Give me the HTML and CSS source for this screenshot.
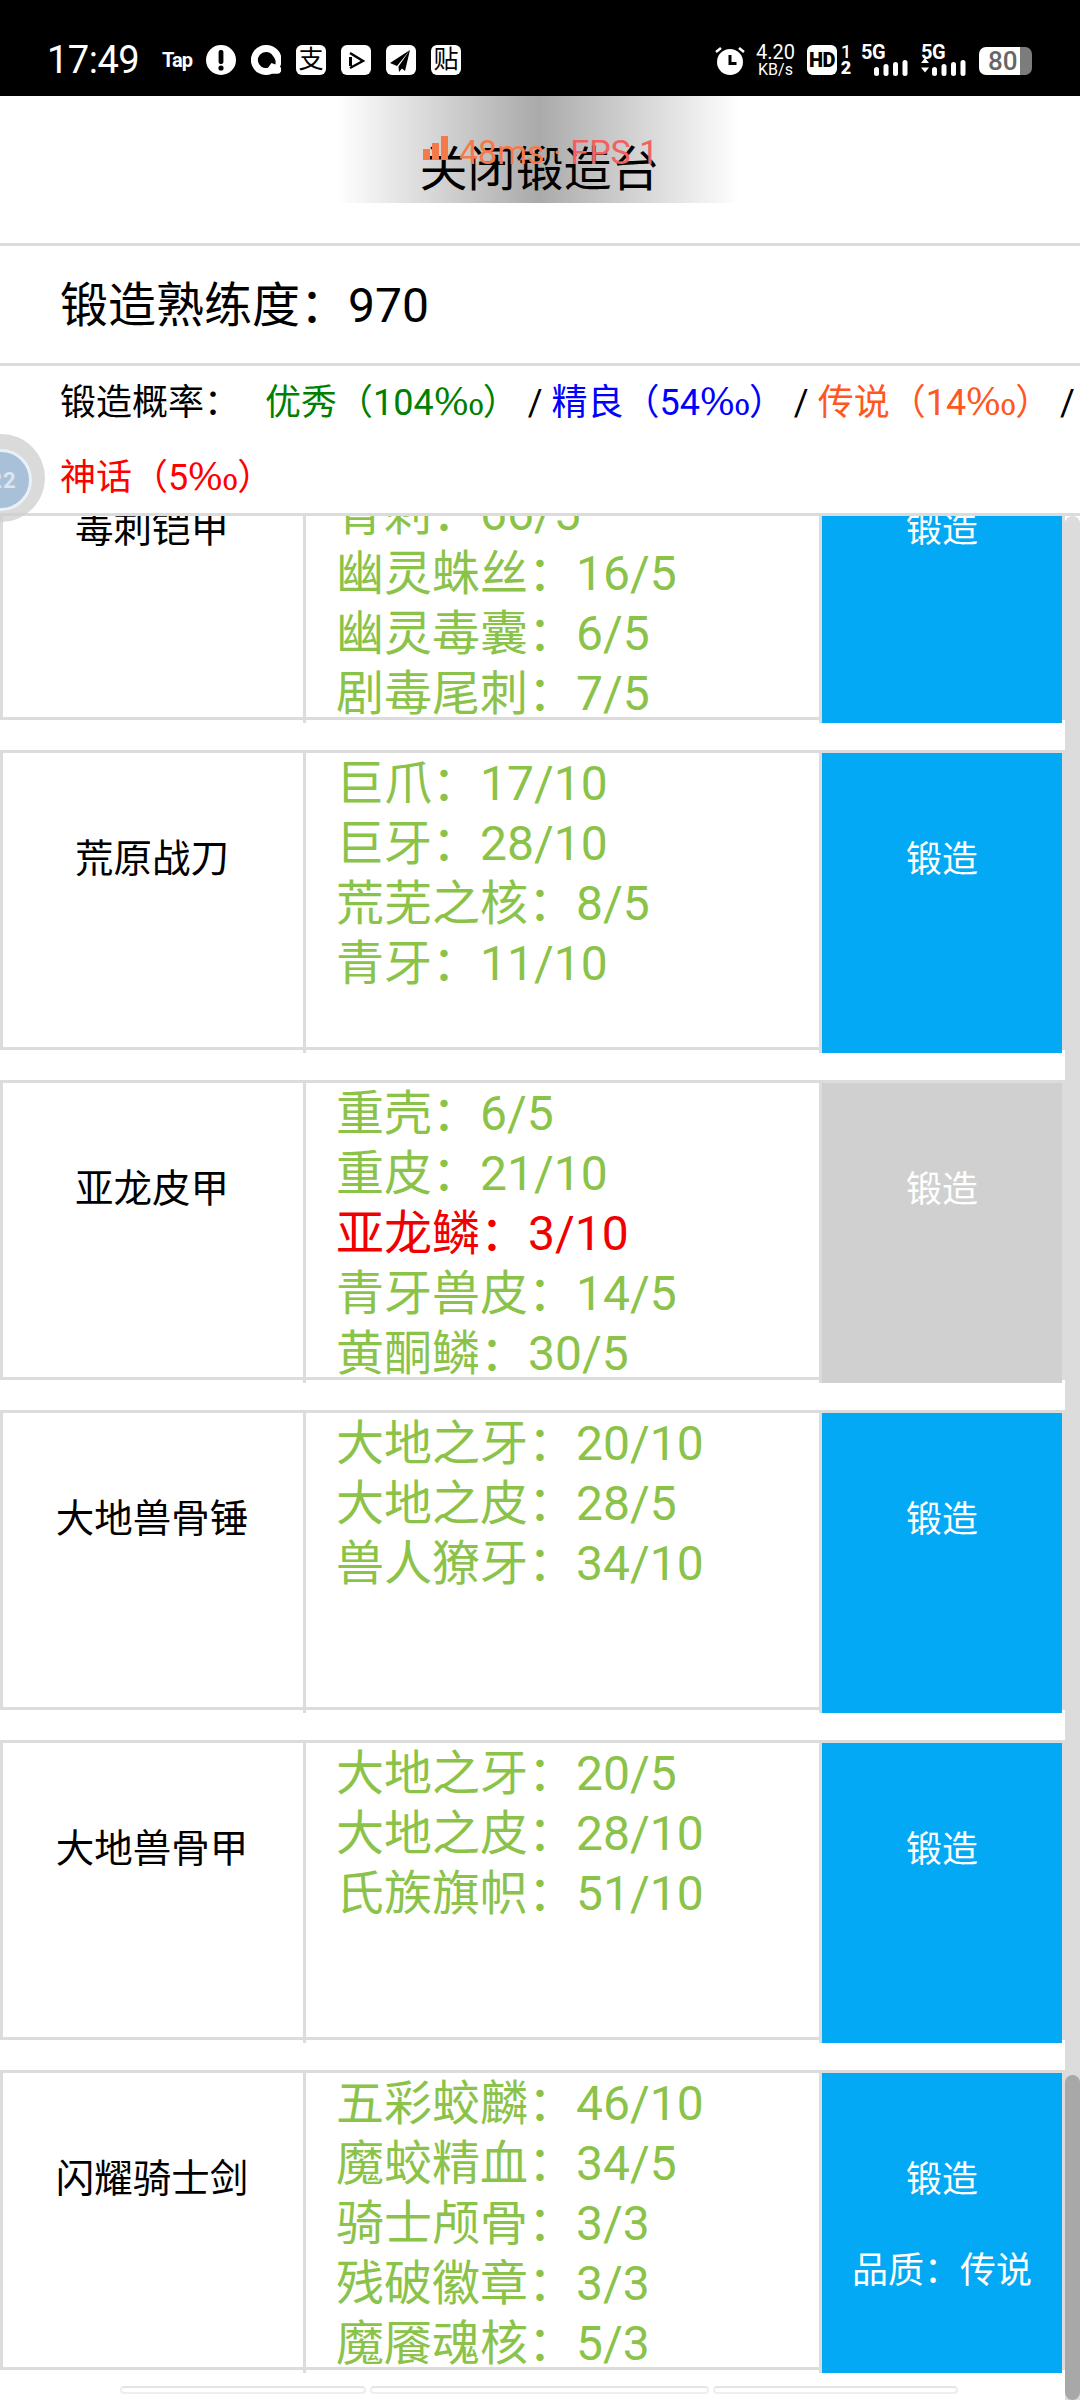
FILE: index.html
```html
<!DOCTYPE html>
<html lang="zh-CN">
<head>
<meta charset="utf-8">
<title>锻造台</title>
<link rel="stylesheet" href="styles.css">
</head>
<body>
<div class="screen">
  <header class="status">
    <span class="clock">17:49</span>
    <span class="tap">Tap</span>
    <svg class="ico" viewBox="0 0 30 30"><circle cx="15" cy="15" r="15" fill="#fff"/><rect x="12.600" y="5" width="4.800" height="14" rx="2" fill="#000"/><circle cx="15" cy="23" r="2.600" fill="#000"/></svg>
    <svg class="ico" viewBox="0 0 30 30"><path d="M15 0a15 15 0 1 0 6 28.700h5a4 4 0 0 0 3-7A15 15 0 0 0 15 0z" fill="#fff"/><path d="M15 7a8 8 0 1 0 2 15.700l3.500-4.700 4 1.500A10 10 0 0 0 22 11a8 8 0 0 0-7-4z" fill="#000"/></svg>
    <span class="app-ico">支</span>
    <svg class="ico" viewBox="0 0 30 30"><rect width="30" height="30" rx="6" fill="#fff"/><path d="M9 8l13 8-13 7" fill="none" stroke="#000" stroke-width="2.400"/><path d="M9.500 12v9" stroke="#000" stroke-width="3"/></svg>
    <svg class="ico" viewBox="0 0 30 30"><rect width="30" height="30" rx="6" fill="#fff"/><path d="M24 5L4 18l7 3zM24 5L12.500 21.500l.5 5.500 3-3.500 3 2.500z" fill="#000"/></svg>
    <span class="app-ico app-ico-last">贴</span>
    <span class="status-gap"></span>
    <svg class="ico-alarm" viewBox="0 0 30 30"><path d="M1 7l5-4M29 7l-5-4" stroke="#fff" stroke-width="2.500"/><circle cx="15" cy="17" r="13" fill="#fff"/><path d="M15 10v8.500h6.500" fill="none" stroke="#000" stroke-width="3"/></svg>
    <span class="speed"><span>4.20</span><span class="speed-unit">KB/s</span></span>
    <span class="hd">HD</span>
    <span class="sim"><span class="sim-a">1</span><span>2</span></span>
    <span class="net"><span class="net-g">5G</span><svg class="bars" viewBox="0 0 34 17"><rect x="0" y="8" width="5" height="9" rx="2.500"/><rect x="9.500" y="5" width="5" height="12" rx="2.500"/><rect x="19" y="3" width="5" height="14" rx="2.500"/><rect x="28.500" y="1" width="5" height="16" rx="2.500"/></svg></span>
    <span class="net net-2"><span class="net-g">5G</span><svg class="bars-b" viewBox="0 0 47 18"><path d="M0 5l4-5 4 5zM0 9.500h8l-4 5z"/><rect x="11" y="9" width="5" height="9" rx="2.500"/><rect x="20.500" y="6" width="5" height="12" rx="2.500"/><rect x="30" y="4" width="5" height="14" rx="2.500"/><rect x="39.500" y="2" width="5" height="16" rx="2.500"/></svg></span>
    <span class="battery"><span class="battery-num">80</span><span class="battery-cap"></span></span>
  </header>

  <main class="panel">
    <div class="close-bar">关闭锻造台</div>
    <div class="mastery">锻造熟练度：970</div>
    <div class="rates">锻造概率：<span class="rate-list"><span class="c-green">优秀（104<span class="pm">‰</span>）</span> / <span class="c-blue">精良（54<span class="pm">‰</span>）</span> / <span class="c-orange">传说（14<span class="pm">‰</span>）</span> / <span class="c-red">神话（5<span class="pm">‰</span>）</span></span></div>

    <div class="list-wrap">
      <div class="list">
        <section class="row">
          <div class="name">毒刺铠甲</div>
          <div class="mats mats-first"><div>骨刺：66/5</div><div>幽灵蛛丝：16/5</div><div>幽灵毒囊：6/5</div><div>剧毒尾刺：7/5</div></div>
          <button class="forge">锻造</button>
        </section>
        <section class="row">
          <div class="name">荒原战刀</div>
          <div class="mats"><div>巨爪：17/10</div><div>巨牙：28/10</div><div>荒芜之核：8/5</div><div>青牙：11/10</div></div>
          <button class="forge">锻造</button>
        </section>
        <section class="row">
          <div class="name">亚龙皮甲</div>
          <div class="mats"><div>重壳：6/5</div><div>重皮：21/10</div><div class="lack">亚龙鳞：3/10</div><div>青牙兽皮：14/5</div><div>黄酮鳞：30/5</div></div>
          <button class="forge forge-off">锻造</button>
        </section>
        <section class="row">
          <div class="name">大地兽骨锤</div>
          <div class="mats"><div>大地之牙：20/10</div><div>大地之皮：28/5</div><div>兽人獠牙：34/10</div></div>
          <button class="forge">锻造</button>
        </section>
        <section class="row">
          <div class="name">大地兽骨甲</div>
          <div class="mats"><div>大地之牙：20/5</div><div>大地之皮：28/10</div><div>氏族旗帜：51/10</div></div>
          <button class="forge">锻造</button>
        </section>
        <section class="row row-last">
          <div class="name">闪耀骑士剑</div>
          <div class="mats"><div>五彩蛟麟：46/10</div><div>魔蛟精血：34/5</div><div>骑士颅骨：3/3</div><div>残破徽章：3/3</div><div>魔餍魂核：5/3</div></div>
          <button class="forge">锻造<span class="quality">品质：传说</span></button>
        </section>
        <div class="tabs"><span class="tab tab-a"></span><span class="tab tab-b"></span><span class="tab tab-c"></span></div>
      </div>
      <div class="scrollbar"><span class="thumb"></span></div>
    </div>
  </main>

  <div class="fps"><span class="fps-bars"><i></i><i></i><i></i></span><span class="fps-text">48ms · <span class="fps-rate">FPS 1</span></span></div>
  <div class="ball"><span class="ball-in">22</span></div>
</div>
</body>
</html>
```
FILE: styles.css
```css
* { box-sizing: border-box; }
html, body { margin: 0; padding: 0; }
body { width: 1080px; height: 2400px; overflow: hidden; background: #fff; font-family: Roboto, "Noto Sans CJK SC", sans-serif; color: #000; }
.screen { position: relative; width: 1080px; height: 2400px; overflow: hidden; display: flex; flex-direction: column; }

.status { height: 96px; flex: none; background: #000; color: #fff; display: flex; align-items: center; padding: 24px 0 0 47px; }
.clock { font-size: 38px; font-weight: 400; width: 115px; flex: none; letter-spacing: -.5px; }
.tap { font-size: 20px; font-weight: 700; width: 44px; flex: none; letter-spacing: -1px; }
.ico { width: 30px; height: 30px; margin-right: 15px; flex: none; }
.app-ico { width: 30px; height: 30px; margin-right: 15px; flex: none; background: #fff; color: #000; border-radius: 6px; font-size: 25px; line-height: 29px; text-align: center; }
.status-gap { width: 239px; flex: none; }
.ico-alarm { width: 30px; height: 30px; flex: none; margin-right: 11px; }
.speed { display: flex; flex-direction: column; align-items: center; font-size: 20px; line-height: 19px; width: 39px; flex: none; margin-right: 12px; }
.speed-unit { font-size: 16px; line-height: 16px; }
.hd { width: 30px; height: 30px; flex: none; background: #fff; color: #000; border-radius: 6px; font-size: 20px; font-weight: 900; line-height: 30px; text-align: center; letter-spacing: -.5px; margin-right: 5px; }
.sim { display: flex; flex-direction: column; font-size: 18px; line-height: 16px; font-weight: 900; width: 8px; flex: none; align-items: center; margin-right: 11px; }
.sim-a { font-weight: 500; }
.net { position: relative; width: 47px; height: 32px; flex: none; font-weight: 700; font-size: 20px; margin-right: 13px; }
.net-2 { margin-right: 11px; }
.net-g { position: absolute; left: 0; top: 0; line-height: 16px; letter-spacing: -.5px; }
.bars { position: absolute; left: 13px; bottom: 0; width: 34px; height: 17px; fill: #fff; }
.bars-b { position: absolute; left: 0; bottom: 0; width: 47px; height: 18px; fill: #fff; }
.battery { position: relative; width: 51px; height: 28px; flex: none; background: #fff; border-radius: 7px; color: #666; font-size: 26px; font-weight: 500; line-height: 28px; padding-left: 9px; margin-top: 2px; }
.battery-cap { position: absolute; right: -2px; top: 0; bottom: 0; width: 12px; background: #7c7c7c; border-radius: 0 7px 7px 0; }
.battery-num { position: relative; z-index: 1; }

.panel { flex: 1; min-height: 0; display: flex; flex-direction: column; }
.close-bar { height: 150px; flex: none; border-bottom: 3px solid #dcdcdc; text-align: center; font-size: 48px; line-height: 148px; padding-right: 1px; background: linear-gradient(90deg, rgba(170,170,170,0), #aaaaaa 50%, rgba(170,170,170,0)) no-repeat 337px 0 / 403px 107px; }
.mastery { height: 120px; flex: none; border-bottom: 3px solid #dcdcdc; padding-left: 60px; font-size: 48px; line-height: 119px; }
.rates { height: 150px; flex: none; border-bottom: 3px solid #dcdcdc; padding: 0 0 0 60px; font-size: 36px; line-height: 75px; }
.rate-list { margin-left: 25px; }
.rate-list > span { white-space: nowrap; }
.pm { display: inline-block; width: 49px; line-height: 0; font-family: "Noto Sans CJK SC", sans-serif; transform: scaleX(1.4); transform-origin: left center; }
.c-green { color: #008000; }
.c-blue { color: #0000ff; }
.c-orange { color: #ff5722; }
.c-red { color: #ff0000; }

.list-wrap { flex: 1; min-height: 0; position: relative; overflow: hidden; }
.list { margin-top: -96px; width: 1065px; }
.scrollbar { position: absolute; top: 0; right: 0; bottom: 0; width: 15px; background: #dcdcdc; border-radius: 8px 8px 0 0; }
.thumb { position: absolute; left: 0; right: 0; top: 1559px; bottom: 0; background: #a8a8a8; border-radius: 8px; }

.row { display: flex; height: 300px; margin-bottom: 30px; border: 3px solid #dcdcdc; }
.row-last { margin-bottom: 0; }
.name { width: 303px; height: 300px; flex: none; border-right: 3px solid #dcdcdc; text-align: center; font-size: 38.500px; line-height: 54px; padding: 79px 2px 0 0; white-space: nowrap; }
.mats { flex: 1; height: 300px; border-right: 3px solid #dcdcdc; font-size: 48px; line-height: 60px; color: #8bc34a; padding: 1px 0 0 30px; white-space: nowrap; }
.mats-first { padding-top: 61px; }
.lack { color: #f00000; }
.forge { width: 240px; height: 300px; flex: none; margin: 0; border: 0; background: #03a9f4; color: #fff; font: inherit; font-size: 36px; line-height: 54px; padding: 80px 0 0; display: flex; flex-direction: column; align-items: center; }
.forge-off { background: #d0d0d0; }
.quality { margin-top: 37px; }

.tabs { display: flex; gap: 4px; padding: 16px 0 0 120px; }
.tab { height: 8px; border: 2px solid #eeeeee; border-top-color: #e4e4e4; border-radius: 4px; }
.tab-a { width: 246px; }
.tab-b { width: 339px; }
.tab-c { width: 245px; }

.fps { position: absolute; left: 423px; top: 132px; height: 40px; display: flex; align-items: center; gap: 11px; }
.fps-bars { display: flex; align-items: flex-end; gap: 2px; height: 24px; margin-bottom: 8px; }
.fps-bars i { display: block; width: 7px; background: #f47a4c; }
.fps-bars i:nth-child(1) { height: 11px; }
.fps-bars i:nth-child(2) { height: 17px; }
.fps-bars i:nth-child(3) { height: 24px; }
.fps-text { font-size: 34px; color: #f47a4c; white-space: nowrap; line-height: 40px; }
.fps-rate { color: #f26060; }

.ball { position: absolute; left: -43px; top: 434px; width: 88px; height: 88px; border-radius: 50%; background: rgba(205,205,205,.75); display: flex; align-items: center; justify-content: center; }
.ball-in { width: 62px; height: 62px; border-radius: 50%; background: #a9c0d9; border: 3px solid #eaf0f7; color: #dde5ee; font-size: 22px; font-weight: 700; letter-spacing: 1px; display: flex; align-items: center; justify-content: center; padding-left: 4px; margin-top: 4px; }
```
